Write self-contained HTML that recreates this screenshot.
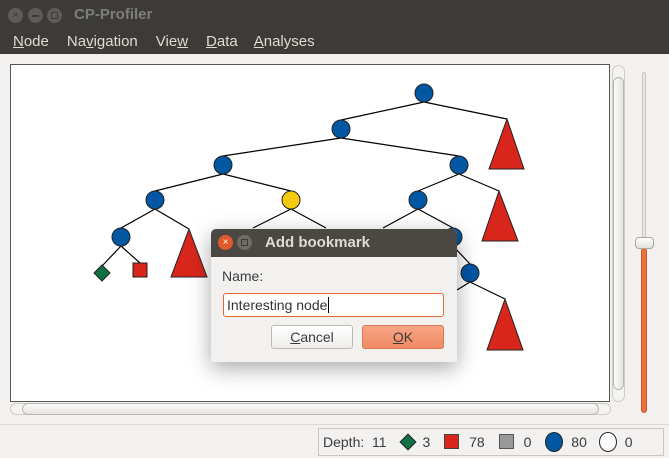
<!DOCTYPE html>
<html><head><meta charset="utf-8"><style>
*{margin:0;padding:0;box-sizing:border-box}
body{width:669px;height:458px;overflow:hidden;background:#f2f1f0;font-family:"Liberation Sans","DejaVu Sans",sans-serif;position:relative}
.abs{position:absolute}
u{text-decoration:underline}
</style></head><body>
<div class="abs" style="left:0;top:0;width:669px;height:54px;background:#3c3b37"></div>
<div class="abs" style="left:8px;top:8px;width:15px;height:15px;border-radius:50%;background:#5d5c58;color:#3c3b37;font-size:10px;text-align:center;line-height:15px">×</div>
<div class="abs" style="left:28px;top:8px;width:15px;height:15px;border-radius:50%;background:#5d5c58"><div class="abs" style="left:4px;top:7px;width:7px;height:1.5px;background:#3c3b37"></div></div>
<div class="abs" style="left:47px;top:8px;width:15px;height:15px;border-radius:50%;background:#5d5c58"><div class="abs" style="left:4px;top:4px;width:7px;height:7px;border:1.3px solid #3c3b37"></div></div>
<div class="abs" style="left:74px;top:6px;color:#7e7d78;font-weight:bold;font-size:15px">CP-Profiler</div>
<div class="abs" style="left:13px;top:33px;color:#dfdbd2;font-size:15px;word-spacing:0"><span><u>N</u>ode</span><span style="margin-left:18px">Na<u>v</u>igation</span><span style="margin-left:18px">Vie<u>w</u></span><span style="margin-left:18px"><u>D</u>ata</span><span style="margin-left:16px"><u>A</u>nalyses</span></div>

<div class="abs" style="left:10px;top:64px;width:600px;height:338px;background:#fff;border:1px solid #555"></div>
<svg class="abs" style="left:0;top:0" width="669" height="458">
<g stroke="#000" stroke-width="1.2" fill="none">
<path d="M424 102L341 120M424 102L507 119M341 138L223 156M341 138L459 156M223 174L155 191M223 174L291 191M459 174L418 191M459 174L499 191M155 209L121 228M155 209L189 229M121 246L102 266M121 246L140 263M291 209L253 228M291 209L326 228M418 209L383 228M418 209L453 228M453 246L470 264M470 282L457 290M470 282L505 299"/>
</g>
<g fill="#d9261c" stroke="#222" stroke-width="1">
<path d="M507 119L524 169L489 169Z"/><path d="M499 191L518 241L482 241Z"/><path d="M189 229L207 277L171 277Z"/><path d="M505 299L523 350L487 350Z"/>
<rect x="133" y="263" width="14" height="14"/>
</g>
<path d="M102 265L110 273L102 281L94 273Z" fill="#0f7143" stroke="#222"/>
<g fill="#0257a2" stroke="#222" stroke-width="1">
<circle cx="424" cy="93" r="9"/><circle cx="341" cy="129" r="9"/><circle cx="223" cy="165" r="9"/><circle cx="459" cy="165" r="9"/><circle cx="155" cy="200" r="9"/><circle cx="418" cy="200" r="9"/><circle cx="121" cy="237" r="9"/><circle cx="453" cy="237" r="9"/><circle cx="470" cy="273" r="9"/>
</g>
<circle cx="291" cy="200" r="9" fill="#f2cb10" stroke="#222"/>
</svg>

<div class="abs" style="left:612px;top:65px;width:13px;height:337px;border:1px solid #cfccc7;border-radius:7px;background:#f4f3f2"></div>
<div class="abs" style="left:613px;top:77px;width:11px;height:313px;border:1px solid #b9b6b0;border-radius:6px;background:linear-gradient(90deg,#fafafa,#e6e4e1)"></div>
<div class="abs" style="left:10px;top:403px;width:601px;height:12px;border:1px solid #cfccc7;border-radius:7px;background:#f4f3f2"></div>
<div class="abs" style="left:22px;top:403px;width:577px;height:12px;border:1px solid #b9b6b0;border-radius:6px;background:linear-gradient(#fafafa,#e6e4e1)"></div>
<div class="abs" style="left:642px;top:72px;width:4px;height:172px;background:#e8e6e3;border:1px solid #c8c5c0;border-radius:2px"></div>
<div class="abs" style="left:641px;top:248px;width:6px;height:165px;background:#e9733f;border:1px solid #c9562a;border-radius:3px"></div>
<div class="abs" style="left:635px;top:237px;width:19px;height:12px;background:linear-gradient(#fff,#e2e0dd);border:1px solid #a9a6a0;border-radius:4px"></div>

<div class="abs" style="left:0;top:424px;width:669px;height:1px;background:#dcdad6"></div>
<div class="abs" style="left:318px;top:428px;width:346px;height:28px;border:1px solid #c9c6c1;font-size:14px;color:#3c3c3c;line-height:26px;padding-left:4px;white-space:nowrap">Depth:&nbsp; 11
<span style="display:inline-block;width:12px;height:12px;background:#0f7143;transform:rotate(45deg);margin:0 8px 0 12px;border:1px solid #222;vertical-align:-1px"></span>3
<span style="display:inline-block;width:15px;height:15px;background:#d9261c;border:1px solid #444;margin:0 10px 0 10px;vertical-align:-2px"></span>78
<span style="display:inline-block;width:15px;height:15px;background:#999;border:1px solid #555;margin:0 10px 0 10px;vertical-align:-2px"></span>0
<span style="display:inline-block;width:18px;height:20px;border-radius:50%;background:#0257a2;border:1px solid #222;margin:0 8px 0 10px;vertical-align:-5px"></span>80
<span style="display:inline-block;width:18px;height:20px;border-radius:50%;background:#fff;border:1px solid #222;margin:0 8px 0 8px;vertical-align:-5px"></span>0</div>

<div class="abs" style="left:211px;top:229px;width:246px;height:133px;background:#f2f1f0;border-radius:5px 5px 0 0;box-shadow:0 6px 22px rgba(0,0,0,.35);overflow:hidden">
<div style="height:28px;background:#4b4843;position:relative">
<div class="abs" style="left:7px;top:6px;width:15px;height:15px;border-radius:50%;background:#e25a2b;color:#fff;font-size:10px;text-align:center;line-height:15px">×</div>
<div class="abs" style="left:26px;top:6px;width:15px;height:15px;border-radius:50%;background:#6f6c66"><div class="abs" style="left:4px;top:4px;width:7px;height:7px;border:1.3px solid #3c3b37"></div></div>
<div class="abs" style="left:54px;top:5px;color:#dfdbd2;font-weight:bold;font-size:15px">Add bookmark</div>
</div>
<div class="abs" style="left:11px;top:39px;font-size:14px;color:#3c3c3c">Name:</div>
<div class="abs" style="left:12px;top:64px;width:221px;height:24px;background:#fff;border:1px solid #e0693b;border-radius:3px;font-size:14px;color:#333;padding-left:3px;line-height:22px">Interesting node<span style="border-left:1px solid #000;margin-left:1px"></span></div>
<div class="abs" style="left:60px;top:96px;width:82px;height:24px;border:1px solid #bdbab4;border-radius:3px;background:linear-gradient(#fff,#eeedeb);font-size:14px;color:#3c3c3c;text-align:center;line-height:22px"><u>C</u>ancel</div>
<div class="abs" style="left:151px;top:96px;width:82px;height:24px;border:1px solid #d77a55;border-radius:3px;background:linear-gradient(#f7a587,#f08a63);font-size:14px;color:#3c3c3c;text-align:center;line-height:22px"><u>O</u>K</div>
</div>
</body></html>
